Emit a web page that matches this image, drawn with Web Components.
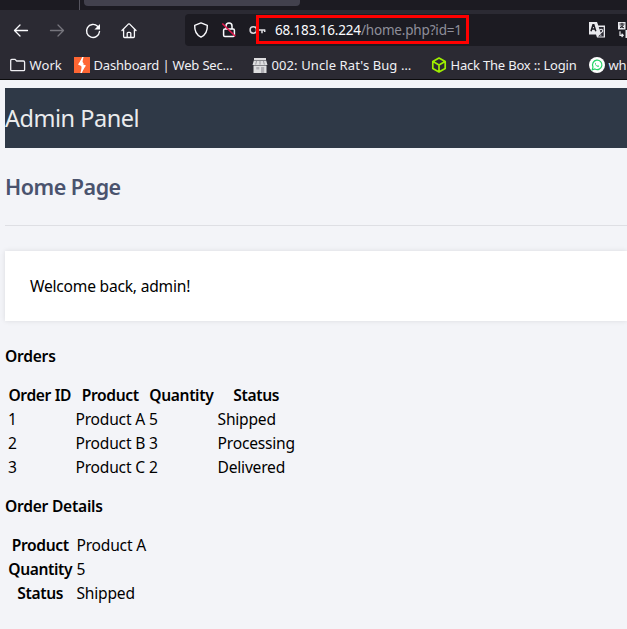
<!DOCTYPE html>
<html lang="en">
<head>
<meta charset="utf-8">
<title>Admin Panel</title>
<style>
html,body{margin:0;height:629px;overflow:hidden;background:#f3f4f8;font-family:"Noto Sans","Open Sans",sans-serif}
</style>
</head>
<body>
<browser-chrome></browser-chrome>
<admin-page></admin-page>
<script>
const define = (name, html) => customElements.define(name, class extends HTMLElement {
  constructor() {
    super();
    const t = document.createElement('template');
    t.innerHTML = html;
    this.attachShadow({mode: 'open'}).append(t.content.cloneNode(true));
  }
});

const ICONS = {
  back: [16, '<path d="M14.500 7.500H1.500M7 2 1.500 7.500 7 13" fill="none" stroke="#fbfbfe" stroke-width="1.300" stroke-linecap="round" stroke-linejoin="round"/>'],
  forward: [16, '<path d="M1.500 7.500h13M9 2 14.500 7.500 9 13" fill="none" stroke="#76757d" stroke-width="1.300" stroke-linecap="round" stroke-linejoin="round"/>'],
  reload: [16, '<path d="M12.600 3.300A6.500 6.500 0 1 0 14.500 8.500" fill="none" stroke="#fbfbfe" stroke-width="1.400" stroke-linecap="round"/><path d="M15 1v5.600H9.400z" fill="#fbfbfe"/>'],
  home: [16, '<path d="M1 7.500 7.300 1.100q.7-.6 1.400 0L15 7.500M2.600 6.500v7q0 1 1 1h8.800q1 0 1-1v-7M6.200 14.500V10.300q0-1 1-1h1.600q1 0 1 1v4.200" fill="none" stroke="#fbfbfe" stroke-width="1.300" stroke-linecap="round" stroke-linejoin="round"/>'],
  shield: [16, '<path d="M8 .9 14.300 3.300C14.600 9 12.500 13 8 15.200 3.500 13 1.400 9 1.700 3.300z" fill="none" stroke="#fbfbfe" stroke-width="1.400" stroke-linejoin="round"/>'],
  lock: [16, '<path d="M5 7V4a3 3 0 0 1 6 0V7M3.800 7h8.400q1.200 0 1.200 1.200v5q0 1.200-1.200 1.200H3.800q-1.200 0-1.200-1.200v-5Q2.600 7 3.800 7z" fill="none" stroke="#fbfbfe" stroke-width="1.500"/><path d="m1.300 1.500 13 12.800" stroke="#e2174b" stroke-width="1.600"/>'],
  key: [17, '<circle cx="4.300" cy="8" r="3.200" fill="none" stroke="#d8d8dc" stroke-width="1.500"/><path d="M7.500 8h8.800M13 8v3.200M15.700 8v2" fill="none" stroke="#e0e0e4" stroke-width="1.500"/>'],
  translate: [16, '<path d="M0 0h8l1.300 3.500H16v12H8l-1-3H0z" fill="#e9e9ed"/><path d="M9.700 5h5v9.500H9l3-2.700z" fill="#2b2a33"/><path d="m2 9.200 2-6.400h.8l2 6.400M2.800 7h3.400" fill="none" stroke="#1c1b22" stroke-width="1.500"/><path d="M10.500 8q2-1.500 3 0t-1.700 2.700v.8M11.800 12.700v1" fill="none" stroke="#e9e9ed" stroke-width="1.100"/>'],
  language: [16, '<path d="M0 0h7.500v7.500H0zM7.500 8H16v8H7.500z" fill="#e9e9ed"/><path d="M1.500 2h5M4 .8v3.700M2 5.800q3-1 3.500-3M2.300 3.500q1 2 3.700 2.300" fill="none" stroke="#1c1b22"/><path d="M2 9.300v4h3M3.600 11.800 5.200 13.300 3.600 15" fill="none" stroke="#e9e9ed" stroke-width="1.200"/>'],
  folder: [17, '<path d="M1.700 12.700v-9.300q0-1 1-1h3.300l1.700 1.600h6.700q1.200 0 1.200 1.200v7.500q0 1-1 1H2.700q-1 0-1-1z" fill="none" stroke="#f0f0f4" stroke-width="1.300"/>'],
  bolt: [16, '<path d="M0 0h16v16H0z" fill="#ff6633"/><path d="M9 0 4 7.600 7.600 9.200 7 16 12 8.500 8.300 6.900z" fill="#fff"/><path d="M9 0 7 4.500 8.800 6.500 7.800 8.400 9.300 10.500 7 16" fill="none" stroke="#fff" stroke-width="1.500"/>'],
  shop: [16, '<path d="M2 1h12v2H2zM1.800 3.500h12.400L15.500 8H.5zM1.500 8.500h13V16h-13z" fill="#dedee0"/><path d="M4.300 10h3v2.500h-3zM9 10h3.200v6H9z" fill="#b0afb5"/><path d="m4.500 4-.8 3.500M8 4v3.500M11.500 4l.8 3.500" stroke="#99989f"/>'],
  cube: [16, '<path d="m8 1 6.200 3.500v7L8 15l-6.200-3.500v-7zM2 4.600 8 8l6-3.400M8 8v7" fill="none" stroke="#9fef00" stroke-width="1.700" stroke-linejoin="round"/>'],
  whatsapp: [16, '<circle cx="8" cy="8" r="8" fill="#fff"/><path d="m3.200 12.800.8-2.900A4.700 4.700 0 1 1 6 12z" fill="none" stroke="#25d366" stroke-width="1.200"/><path d="M6 6.200Q6.500 5.200 7 6.600l-.3.700q.6 1.100 1.700 1.500l.6-.5 1.200.6Q9.700 10.200 8 9.600 5.900 8.600 6 6.200z" fill="#25d366"/>']
};
customElements.define('ui-icon', class extends HTMLElement {
  connectedCallback() {
    const [w, body] = ICONS[this.getAttribute('name')];
    this.attachShadow({mode: 'open'}).innerHTML =
      `<style>:host{display:block;flex:none;width:${w}px;height:16px}svg{display:block}</style><svg width="${w}" height="16" viewBox="0 0 ${w} 16">${body}</svg>`;
  }
});

define('bookmark-item', `<style>
:host{display:flex;align-items:center;gap:3.500px;flex:none;width:var(--w);white-space:nowrap;font-size:13px;line-height:18px;letter-spacing:var(--ls,0);color:#f0f0f4}
</style><slot name="icon"></slot><span><slot></slot></span>`);

define('browser-chrome', `<style>
:host{display:block;height:80px;box-sizing:border-box;width:627px;overflow:hidden;background:#2b2a33;border-bottom:1px solid #0c0c0d}
.tabs{display:flex;height:10px;background:#1c1b22}
.sep{width:80px;box-sizing:border-box;border-right:1px solid #55545e}
.tab{width:216px;height:6px;margin-left:4px;background:#42414d;border-radius:0 0 4px 4px}
.nav{display:flex;height:32px;padding:4px 0 4px}
.buttons{display:grid;grid-template-columns:repeat(4,16px);column-gap:20px;align-content:center;padding:1px 0 0 13px;width:172px;flex:none}
.url{display:flex;flex:none;align-items:center;width:470px;height:32px;background:#1c1b22;border-radius:4px 0 0 4px}
.security{display:grid;grid-template-columns:16px 16px 17px;gap:12px;padding-left:8px;width:82px}
.address{display:block;position:relative;width:314px;font-size:13.500px;line-height:20px;letter-spacing:-.17px;color:#8f8f9a;white-space:nowrap}
b{font-weight:400;color:#fbfbfe}
.mark{position:absolute;left:-19px;top:-5px;width:213px;height:29px;box-sizing:border-box;border:3px solid #f00}
.right{display:flex;gap:13px}
.books{display:flex;height:30px;align-items:center;padding-left:9px;margin-top:0}
</style>
<div class="tabs"><div class="sep"></div><div class="tab"></div></div>
<div class="nav"><div class="buttons"><ui-icon name="back"></ui-icon><ui-icon name="forward"></ui-icon><ui-icon name="reload"></ui-icon><ui-icon name="home"></ui-icon></div>
<div class="url"><div class="security"><ui-icon name="shield"></ui-icon><ui-icon name="lock"></ui-icon><ui-icon name="key"></ui-icon></div>
<div class="address"><span><b>68.183.16.224</b>/home.php?id=1</span><div class="mark"></div></div>
<div class="right"><ui-icon name="translate"></ui-icon><ui-icon name="language"></ui-icon></div></div></div>
<div class="books">
<bookmark-item style="--w:65px;--ls:.1px"><ui-icon slot="icon" name="folder"></ui-icon>Work</bookmark-item>
<bookmark-item style="--w:178px;--ls:-.18px"><ui-icon slot="icon" name="bolt"></ui-icon>Dashboard | Web Sec…</bookmark-item>
<bookmark-item style="--w:179px;--ls:.1px"><ui-icon slot="icon" name="shop"></ui-icon>002: Uncle Rat's Bug …</bookmark-item>
<bookmark-item style="--w:158px;--ls:-.2px"><ui-icon slot="icon" name="cube"></ui-icon>Hack The Box :: Login</bookmark-item>
<bookmark-item style="--w:38px;--ls:-.3px"><ui-icon slot="icon" name="whatsapp"></ui-icon>wh</bookmark-item>
</div>`);

const tableCss = 'table{border-spacing:2px;font-size:15.600px;line-height:20px;white-space:nowrap}td,th{padding:1px}td{letter-spacing:-.22px}th{font-weight:600;letter-spacing:-.36px}';
define('orders-table', `<style>:host{display:block}${tableCss}th:nth-child(1){width:63.500px}th:nth-child(2){width:69px}th:nth-child(3){width:64.500px}</style>
<table><tr><th>Order ID</th><th>Product</th><th>Quantity</th><th>Status</th></tr>
<tr><td>1</td><td>Product A</td><td>5</td><td>Shipped</td></tr>
<tr><td>2</td><td>Product B</td><td>3</td><td>Processing</td></tr>
<tr><td>3</td><td>Product C</td><td>2</td><td>Delivered</td></tr></table>`);
define('details-table', `<style>:host{display:block}${tableCss}th{width:64.500px}</style>
<table><tr><th>Product</th><td>Product A</td></tr><tr><th>Quantity</th><td>5</td></tr><tr><th>Status</th><td>Shipped</td></tr></table>`);
define('welcome-card', `<style>:host{display:block;box-sizing:border-box;height:70px;padding:25px;background:#fff;box-shadow:0 0 5px rgba(0,0,0,.1);font-size:15.600px;line-height:20px;letter-spacing:-.22px}</style><slot></slot>`);

define('admin-page', `<style>
:host{display:block;padding:8px 0 0 5px;color:#000}
header{display:flex;align-items:center;height:60px;background:#2f3947;color:#eaebed;font-size:23.500px;line-height:60px;letter-spacing:-.48px}
h2{margin:0;height:77px;border-bottom:1px solid #dedfe4;font-size:21.500px;font-weight:600;line-height:77px;letter-spacing:-.5px;color:#4a536e}
welcome-card{margin-top:25px}
h4{margin:0;font-size:15.600px;font-weight:600;line-height:20px;letter-spacing:-.25px}
.orders{margin-top:25px}
orders-table,details-table{margin-top:16px}
.details{margin-top:16px}
</style>
<header>Admin Panel</header><h2>Home Page</h2>
<welcome-card>Welcome back, admin!</welcome-card>
<h4 class="orders">Orders</h4><orders-table></orders-table>
<h4 class="details">Order Details</h4><details-table></details-table>`);
</script>
</body>
</html>
